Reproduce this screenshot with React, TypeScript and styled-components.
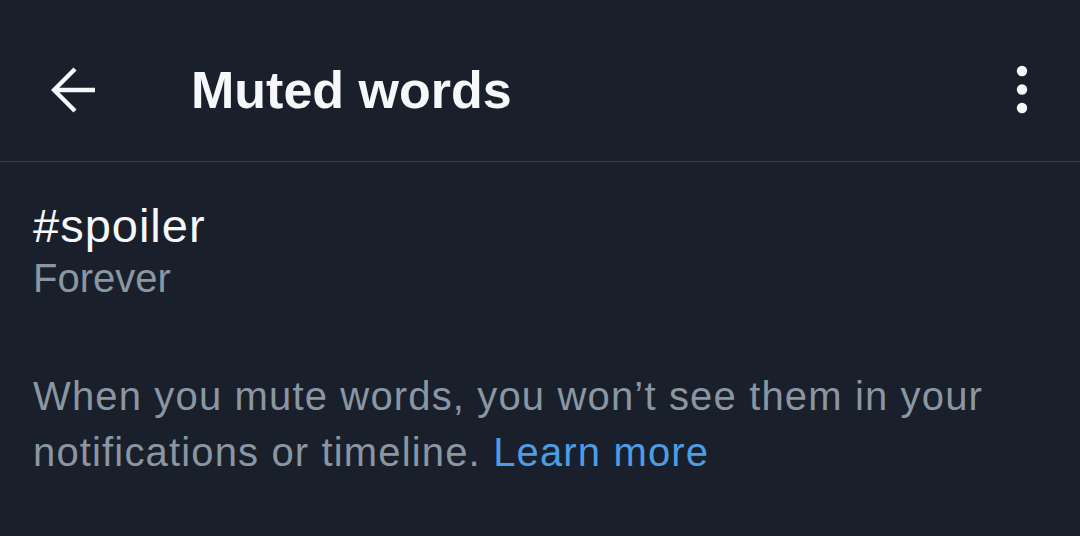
import React from 'react'
import styled, { createGlobalStyle } from 'styled-components'

const GlobalStyle = createGlobalStyle`
  body {
    margin: 0;
    background-color: #19202b;
    font-family: 'Liberation Sans', Arial, sans-serif;
  }
`

const BackIcon = () => (
  <svg width="46" height="46" viewBox="0 0 46 46" fill="none">
    <path
      d="M24 2 L3 23 L24 44 M3 23 H44"
      stroke="#f5f7f9"
      strokeWidth="4.4"
      strokeLinejoin="miter"
    />
  </svg>
)

const MoreIcon = () => (
  <svg width="12" height="50" viewBox="0 0 12 50" fill="#f5f7f9">
    <circle cx="6" cy="6" r="5.2" />
    <circle cx="6" cy="24.5" r="5.2" />
    <circle cx="6" cy="43" r="5.2" />
  </svg>
)

const App = () => {
  return (
    <>
      <GlobalStyle />
      <Page>
        <Header>
          <IconButton aria-label="Back">
            <BackIcon />
          </IconButton>
          <Title>Muted words</Title>
          <MenuButton aria-label="More">
            <MoreIcon />
          </MenuButton>
        </Header>
        <WordItem>
          <Word>#spoiler</Word>
          <Duration>Forever</Duration>
        </WordItem>
        <Note>
          When you mute words, you won’t see them in your notifications or
          timeline. <Link href="#">Learn more</Link>
        </Note>
      </Page>
    </>
  )
}

const Page = styled.div`
  min-height: 536px;
  background-color: #19202b;
  color: #f5f7f9;
`

const Header = styled.div`
  display: flex;
  align-items: center;
  box-sizing: border-box;
  height: 162px;
  padding-top: 18px;
  border-bottom: 1px solid #38414e;
`

const IconButton = styled.button`
  display: flex;
  padding: 0;
  margin-left: 51px;
  background: none;
  border: none;
`

const Title = styled.h1`
  margin: 0 0 0 94px;
  font-size: 52px;
  font-weight: 700;
  line-height: 60px;
  color: #f5f7f9;
`

const MenuButton = styled.button`
  display: flex;
  padding: 0;
  margin: 0 52px 0 auto;
  background: none;
  border: none;
`

const WordItem = styled.div`
  padding: 36px 33px 0;
`

const Word = styled.div`
  font-size: 47px;
  line-height: 56px;
  letter-spacing: 1px;
  color: #f5f7f9;
`

const Duration = styled.div`
  font-size: 40px;
  line-height: 48px;
  color: #8b96a3;
`

const Note = styled.p`
  margin: 66px 0 0;
  padding: 0 33px;
  font-size: 40px;
  line-height: 56px;
  letter-spacing: 1.15px;
  color: #8b96a3;
`

const Link = styled.a`
  color: #4d9de6;
  text-decoration: none;
`

export default App
